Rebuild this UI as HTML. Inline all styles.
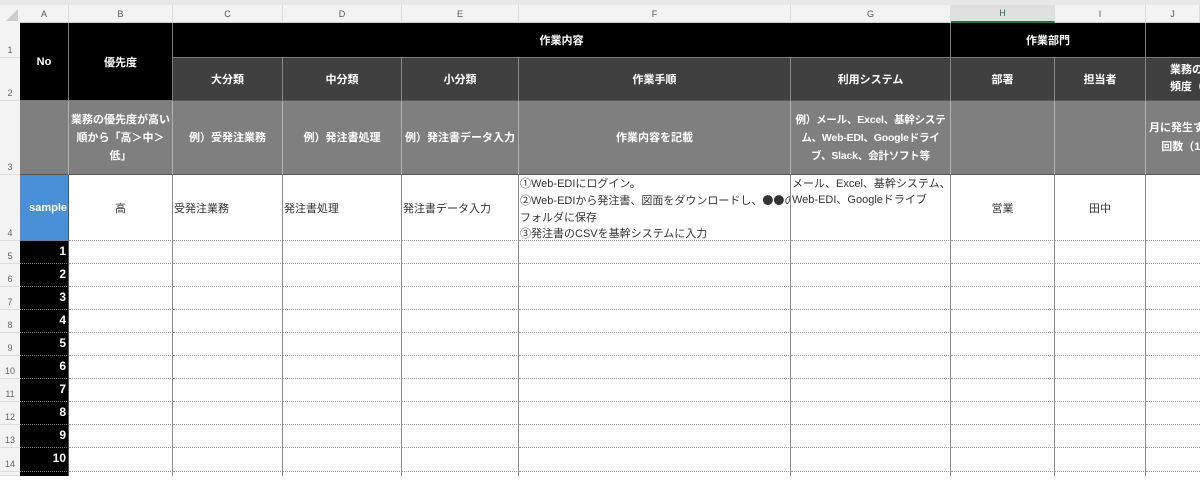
<!DOCTYPE html>
<html><head><meta charset="utf-8"><style>
body{margin:0;width:1200px;height:476px;overflow:hidden;background:#fff;position:relative;font-family:"Liberation Sans","Noto Sans CJK JP",sans-serif;}
.c{position:absolute;box-sizing:border-box;display:flex;align-items:center;justify-content:center;text-align:center;font-size:11px;overflow:hidden;white-space:nowrap;}
.b{background:#000;color:#fff;font-weight:bold;border-right:1px solid #7a7a7a;border-bottom:1px solid #7a7a7a;}
.d{background:#404040;color:#fff;font-weight:bold;border-right:1px solid #888;border-bottom:1px solid #5a5a5a;}
.m{background:#7f7f7f;color:#fff;font-weight:bold;border-right:1px solid #b0b0b0;border-bottom:1px solid #555;line-height:18px;}
.w{background:#fff;color:#333;border-right:1px solid #8a8a8a;border-bottom:1px dotted #999;}
.l{justify-content:flex-start;text-align:left;padding-left:1px;}
.ch{position:absolute;top:5px;height:18px;background:#f3f3f3;color:#555;font-size:9px;display:flex;align-items:center;justify-content:center;border-right:1px solid #ddd;box-sizing:border-box;border-bottom:1px solid #ccc}
.rh{position:absolute;left:0;width:20px;background:#f3f3f3;color:#666;font-size:9px;display:flex;align-items:flex-end;justify-content:center;padding-bottom:2px;box-sizing:border-box;border-bottom:1px solid #ddd}
.cj{font-family:"Noto Sans CJK JP",sans-serif;}
</style></head><body>
<div style="position:absolute;left:0;top:0;width:1200px;height:5px;background:#e8e8e8"></div>
<div style="position:absolute;left:0;top:5px;width:20px;height:18px;background:#f3f3f3"></div>
<div style="position:absolute;left:6px;top:9px;width:0;height:0;border-left:12px solid transparent;border-bottom:12px solid #ccc"></div>
<div class="ch" style="left:20px;width:49px">A</div>
<div class="ch" style="left:69px;width:104px">B</div>
<div class="ch" style="left:173px;width:110px">C</div>
<div class="ch" style="left:283px;width:119px">D</div>
<div class="ch" style="left:402px;width:117px">E</div>
<div class="ch" style="left:519px;width:272px">F</div>
<div class="ch" style="left:791px;width:160px">G</div>
<div class="ch" style="left:951px;width:104px;background:#e0e0e0;color:#217346;border-bottom:2px solid #217346">H</div>
<div class="ch" style="left:1055px;width:91px">I</div>
<div class="ch" style="left:1146px;width:54px">J</div>

<div class="rh" style="top:23px;height:35px">1</div>
<div class="rh" style="top:58px;height:43px">2</div>
<div class="rh" style="top:101px;height:74px">3</div>
<div class="rh" style="top:175px;height:66px">4</div>
<div class="rh" style="top:241px;height:23px">5</div>
<div class="rh" style="top:264px;height:23px">6</div>
<div class="rh" style="top:287px;height:23px">7</div>
<div class="rh" style="top:310px;height:23px">8</div>
<div class="rh" style="top:333px;height:23px">9</div>
<div class="rh" style="top:356px;height:23px">10</div>
<div class="rh" style="top:379px;height:23px">11</div>
<div class="rh" style="top:402px;height:23px">12</div>
<div class="rh" style="top:425px;height:23px">13</div>
<div class="rh" style="top:448px;height:24px">14</div>
<div class="rh" style="top:472px;height:4px"></div>

<div class="c b" style="left:20px;top:23px;width:49px;height:78px">No</div>
<div class="c b" style="left:69px;top:23px;width:104px;height:78px;align-items:flex-start;padding-top:31px">優先度</div>
<div class="c b" style="left:173px;top:23px;width:778px;height:35px">作業内容</div>
<div class="c b" style="left:951px;top:23px;width:195px;height:35px">作業部門</div>
<div class="c b" style="left:1146px;top:23px;width:54px;height:35px;border-right:none"></div>
<div class="c d" style="left:173px;top:58px;width:110px;height:43px">大分類</div>
<div class="c d" style="left:283px;top:58px;width:119px;height:43px">中分類</div>
<div class="c d" style="left:402px;top:58px;width:117px;height:43px">小分類</div>
<div class="c d" style="left:519px;top:58px;width:272px;height:43px">作業手順</div>
<div class="c d" style="left:791px;top:58px;width:160px;height:43px">利用システム</div>
<div class="c d" style="left:951px;top:58px;width:104px;height:43px">部署</div>
<div class="c d" style="left:1055px;top:58px;width:91px;height:43px">担当者</div>
<div class="c d l" style="left:1146px;top:58px;width:54px;height:43px;border-right:none;padding-left:24px"><div style="flex-shrink:0;width:80px;line-height:17px;text-align:left">業務の発生<br>頻度（月</div></div>

<div class="c m" style="left:20px;top:101px;width:49px;height:74px"></div>
<div class="c m" style="left:69px;top:101px;width:104px;height:74px">業務の優先度が高い<br>順から「高＞中＞<br>低」</div>
<div class="c m" style="left:173px;top:101px;width:110px;height:74px">例）受発注業務</div>
<div class="c m" style="left:283px;top:101px;width:119px;height:74px">例）発注書処理</div>
<div class="c m" style="left:402px;top:101px;width:117px;height:74px">例）発注書データ入力</div>
<div class="c m" style="left:519px;top:101px;width:272px;height:74px">作業内容を記載</div>
<div class="c m" style="left:791px;top:101px;width:160px;height:74px;font-size:10.5px;letter-spacing:-0.2px">例）メール、Excel、基幹システ<br>ム、Web-EDI、Googleドライ<br>ブ、Slack、会計ソフト等</div>
<div class="c m" style="left:951px;top:101px;width:104px;height:74px"></div>
<div class="c m" style="left:1055px;top:101px;width:91px;height:74px"></div>
<div class="c m l" style="left:1146px;top:101px;width:54px;height:74px;border-right:none;padding-left:3px"><div style="flex-shrink:0;width:90px;line-height:19px;text-align:left">月に発生する<br>&nbsp;&nbsp;&nbsp;&nbsp;回数（1</div></div>

<div class="c" style="left:20px;top:175px;width:49px;height:66px;background:#4a90d9;color:#fff;font-weight:bold;justify-content:flex-end;padding-right:1px;border-bottom:1px dotted #777;border-right:1px solid #555">sample</div>
<div class="c w" style="left:69px;top:175px;width:104px;height:66px">高</div>
<div class="c w l" style="left:173px;top:175px;width:110px;height:66px">受発注業務</div>
<div class="c w l" style="left:283px;top:175px;width:119px;height:66px">発注書処理</div>
<div class="c w l" style="left:402px;top:175px;width:117px;height:66px">発注書データ入力</div>
<div class="c w l" style="left:519px;top:175px;width:272px;height:66px;align-items:flex-start;line-height:16.3px;padding-top:1px"><div>①Web-EDIにログイン。<br>②Web-EDIから発注書、図面をダウンロードし、<span class="cj">●●</span>の<br>フォルダに保存<br>③発注書のCSVを基幹システムに入力</div></div>
<div class="c w l" style="left:791px;top:175px;width:160px;height:66px;align-items:flex-start;line-height:16.3px;padding-top:1px"><div>メール、Excel、基幹システム、<br>Web-EDI、Googleドライブ</div></div>
<div class="c w" style="left:951px;top:175px;width:104px;height:66px">営業</div>
<div class="c w" style="left:1055px;top:175px;width:91px;height:66px">田中</div>
<div class="c w" style="left:1146px;top:175px;width:54px;height:66px;border-right:none"></div>

<style>
.r{position:absolute;left:0;width:1200px;height:23px}
.r div{position:absolute;top:0;height:23px;box-sizing:border-box;border-bottom:1px dotted #999;border-right:1px solid #8a8a8a}
.r .nn{left:20px;width:49px;background:#000;color:#fff;font-weight:bold;font-size:12px;text-align:right;padding-right:2px;line-height:20px;border-bottom:1px dotted #888;border-right:1px solid #555}
</style>
<div class="r" style="top:241px"><div class="nn">1</div><div style="left:69px;width:104px"></div><div style="left:173px;width:110px"></div><div style="left:283px;width:119px"></div><div style="left:402px;width:117px"></div><div style="left:519px;width:272px"></div><div style="left:791px;width:160px"></div><div style="left:951px;width:104px"></div><div style="left:1055px;width:91px"></div><div style="left:1146px;width:54px;border-right:none"></div></div>
<div class="r" style="top:264px"><div class="nn">2</div><div style="left:69px;width:104px"></div><div style="left:173px;width:110px"></div><div style="left:283px;width:119px"></div><div style="left:402px;width:117px"></div><div style="left:519px;width:272px"></div><div style="left:791px;width:160px"></div><div style="left:951px;width:104px"></div><div style="left:1055px;width:91px"></div><div style="left:1146px;width:54px;border-right:none"></div></div>
<div class="r" style="top:287px"><div class="nn">3</div><div style="left:69px;width:104px"></div><div style="left:173px;width:110px"></div><div style="left:283px;width:119px"></div><div style="left:402px;width:117px"></div><div style="left:519px;width:272px"></div><div style="left:791px;width:160px"></div><div style="left:951px;width:104px"></div><div style="left:1055px;width:91px"></div><div style="left:1146px;width:54px;border-right:none"></div></div>
<div class="r" style="top:310px"><div class="nn">4</div><div style="left:69px;width:104px"></div><div style="left:173px;width:110px"></div><div style="left:283px;width:119px"></div><div style="left:402px;width:117px"></div><div style="left:519px;width:272px"></div><div style="left:791px;width:160px"></div><div style="left:951px;width:104px"></div><div style="left:1055px;width:91px"></div><div style="left:1146px;width:54px;border-right:none"></div></div>
<div class="r" style="top:333px"><div class="nn">5</div><div style="left:69px;width:104px"></div><div style="left:173px;width:110px"></div><div style="left:283px;width:119px"></div><div style="left:402px;width:117px"></div><div style="left:519px;width:272px"></div><div style="left:791px;width:160px"></div><div style="left:951px;width:104px"></div><div style="left:1055px;width:91px"></div><div style="left:1146px;width:54px;border-right:none"></div></div>
<div class="r" style="top:356px"><div class="nn">6</div><div style="left:69px;width:104px"></div><div style="left:173px;width:110px"></div><div style="left:283px;width:119px"></div><div style="left:402px;width:117px"></div><div style="left:519px;width:272px"></div><div style="left:791px;width:160px"></div><div style="left:951px;width:104px"></div><div style="left:1055px;width:91px"></div><div style="left:1146px;width:54px;border-right:none"></div></div>
<div class="r" style="top:379px"><div class="nn">7</div><div style="left:69px;width:104px"></div><div style="left:173px;width:110px"></div><div style="left:283px;width:119px"></div><div style="left:402px;width:117px"></div><div style="left:519px;width:272px"></div><div style="left:791px;width:160px"></div><div style="left:951px;width:104px"></div><div style="left:1055px;width:91px"></div><div style="left:1146px;width:54px;border-right:none"></div></div>
<div class="r" style="top:402px"><div class="nn">8</div><div style="left:69px;width:104px"></div><div style="left:173px;width:110px"></div><div style="left:283px;width:119px"></div><div style="left:402px;width:117px"></div><div style="left:519px;width:272px"></div><div style="left:791px;width:160px"></div><div style="left:951px;width:104px"></div><div style="left:1055px;width:91px"></div><div style="left:1146px;width:54px;border-right:none"></div></div>
<div class="r" style="top:425px"><div class="nn">9</div><div style="left:69px;width:104px"></div><div style="left:173px;width:110px"></div><div style="left:283px;width:119px"></div><div style="left:402px;width:117px"></div><div style="left:519px;width:272px"></div><div style="left:791px;width:160px"></div><div style="left:951px;width:104px"></div><div style="left:1055px;width:91px"></div><div style="left:1146px;width:54px;border-right:none"></div></div>
<div class="r" style="top:448px"><div class="nn" style="height:24px">10</div><div style="left:69px;width:104px;height:24px"></div><div style="left:173px;width:110px;height:24px"></div><div style="left:283px;width:119px;height:24px"></div><div style="left:402px;width:117px;height:24px"></div><div style="left:519px;width:272px;height:24px"></div><div style="left:791px;width:160px;height:24px"></div><div style="left:951px;width:104px;height:24px"></div><div style="left:1055px;width:91px;height:24px"></div><div style="left:1146px;width:54px;height:24px;border-right:none"></div></div>
<div class="r" style="top:472px"><div class="nn" style="height:4px;border-bottom:none"></div><div style="left:69px;width:104px;height:4px;border-bottom:none"></div><div style="left:173px;width:110px;height:4px;border-bottom:none"></div><div style="left:283px;width:119px;height:4px;border-bottom:none"></div><div style="left:402px;width:117px;height:4px;border-bottom:none"></div><div style="left:519px;width:272px;height:4px;border-bottom:none"></div><div style="left:791px;width:160px;height:4px;border-bottom:none"></div><div style="left:951px;width:104px;height:4px;border-bottom:none"></div><div style="left:1055px;width:91px;height:4px;border-bottom:none"></div></div>
</body></html>
